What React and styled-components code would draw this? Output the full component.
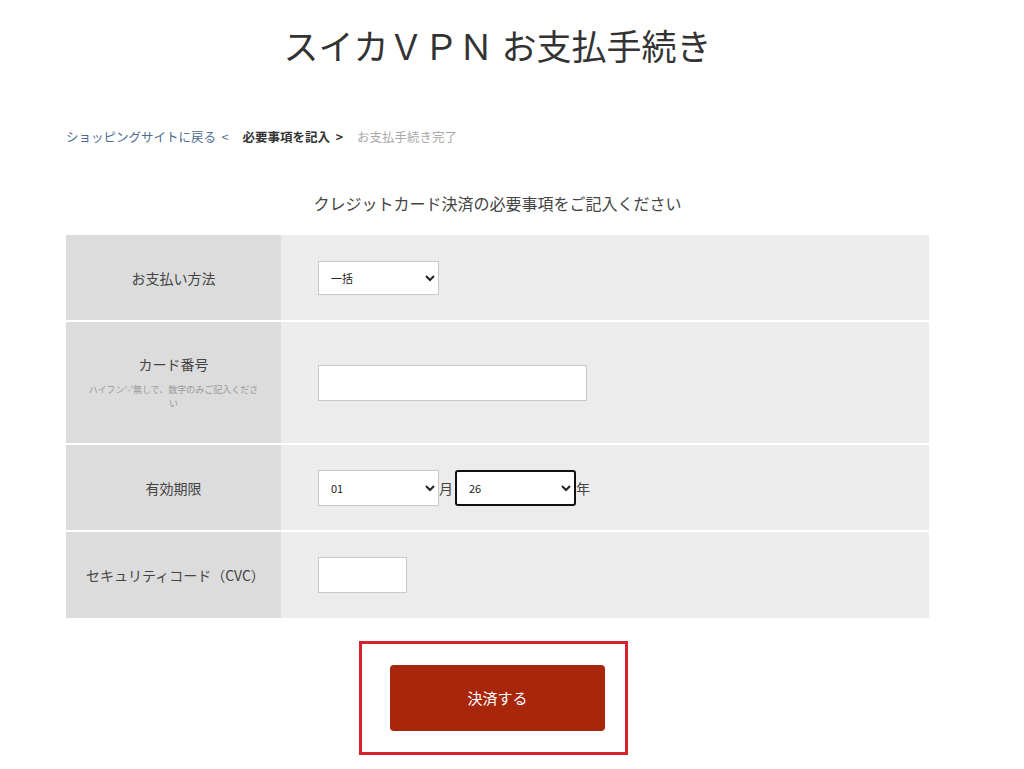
import React from "react";
import styled, { createGlobalStyle } from "styled-components";

const GlobalStyle = createGlobalStyle`
  body {
    margin: 0;
    background: #fff;
    font-family: "Noto Sans CJK JP", "Noto Sans", sans-serif;
    color: #333;
  }
`;

const Page = styled.div`
  width: 995px;
  display: flex;
  flex-direction: column;
`;

const Title = styled.h1`
  margin: 0;
  padding-top: 22px;
  font-size: 35px;
  font-weight: 400;
  line-height: 46px;
  text-align: center;
  color: #333;
`;

const Breadcrumb = styled.div`
  margin: 59px 0 0 66px;
  display: flex;
  align-items: center;
  gap: 14px;
  font-size: 12.5px;
  line-height: 20px;
`;

const Crumb = styled.span`
  color: ${(p) => (p.$state === "link" ? "#4a6d93" : p.$state === "current" ? "#333" : "#a8a8a8")};
  font-weight: ${(p) => (p.$state === "current" ? 700 : 400)};
  white-space: pre;
`;

const Lead = styled.p`
  margin: 44px 0 0;
  font-size: 16px;
  line-height: 24px;
  text-align: center;
  color: #444;
`;

const Table = styled.div`
  margin: 20px 0 0 66px;
  width: 863px;
  display: grid;
  grid-template-columns: 215px 1fr;
  row-gap: 2px;
  background: #fff;
`;

const Label = styled.div`
  height: ${(p) => p.$h}px;
  background: #dcdcdc;
  display: flex;
  flex-direction: column;
  align-items: center;
  justify-content: center;
  padding: 0 20px;
  box-sizing: border-box;
  text-align: center;
  font-size: 14px;
  color: #444;
`;

const Note = styled.div`
  margin-top: 9px;
  font-size: 9px;
  line-height: 14px;
  color: #999;
`;

const Cell = styled.div`
  background: #ececec;
  display: flex;
  align-items: center;
  padding-left: 37px;
  font-size: 14px;
  color: #444;
`;

const Select = styled.select`
  width: ${(p) => p.$w || 121}px;
  height: ${(p) => p.$h || 36}px;
  box-sizing: border-box;
  background: #fff;
  border: ${(p) => (p.$focused ? "2px solid #111" : "1px solid #c8c8c8")};
  border-radius: ${(p) => (p.$focused ? "3px" : "0")};
  padding: 0 8px;
  font-family: "Noto Sans CJK JP", "DejaVu Sans", sans-serif;
  font-size: 11px;
  color: #222;
  outline: none;
`;

const Input = styled.input`
  width: ${(p) => p.$w}px;
  height: 36px;
  box-sizing: border-box;
  background: #fff;
  border: 1px solid #c8c8c8;
  padding: 0 8px;
  outline: none;
`;

const Unit = styled.span`
  font-size: 14px;
  color: #444;
  margin-right: ${(p) => p.$mr || 0}px;
`;

const Highlight = styled.div`
  margin: 23px 0 0 359px;
  width: 269px;
  box-sizing: border-box;
  border: 3px solid #d8232e;
  padding: 21px 20px 21px 28px;
`;

const PayButton = styled.button`
  width: 215px;
  height: 66px;
  border: none;
  border-radius: 4px;
  background: #a8260c;
  color: #fff;
  font-family: "Noto Sans CJK JP", sans-serif;
  font-size: 15px;
  padding-bottom: 3px;
  cursor: pointer;
`;

const App = () => {
  return (
    <>
      <GlobalStyle />
      <Page>
        <Title>スイカＶＰＮ お支払手続き</Title>
        <Breadcrumb>
          <Crumb $state="link">{"ショッピングサイトに戻る  <"}</Crumb>
          <Crumb $state="current">{"必要事項を記入  >"}</Crumb>
          <Crumb $state="done">お支払手続き完了</Crumb>
        </Breadcrumb>
        <Lead>クレジットカード決済の必要事項をご記入ください</Lead>
        <Table>
          <Label $h={85}>お支払い方法</Label>
          <Cell>
            <Select $h={34} defaultValue="1">
              <option value="1">一括</option>
            </Select>
          </Cell>

          <Label $h={121}>
            カード番号
            <Note>ハイフン'-'無しで、数字のみご記入ください</Note>
          </Label>
          <Cell>
            <Input $w={269} />
          </Cell>

          <Label $h={85}>有効期限</Label>
          <Cell>
            <Select defaultValue="01">
              <option value="01">01</option>
            </Select>
            <Unit $mr={2}>月</Unit>
            <Select $focused defaultValue="26">
              <option value="26">26</option>
            </Select>
            <Unit>年</Unit>
          </Cell>

          <Label $h={86}>セキュリティコード（CVC）</Label>
          <Cell>
            <Input $w={89} />
          </Cell>
        </Table>
        <Highlight>
          <PayButton>決済する</PayButton>
        </Highlight>
      </Page>
    </>
  );
};

export default App;
